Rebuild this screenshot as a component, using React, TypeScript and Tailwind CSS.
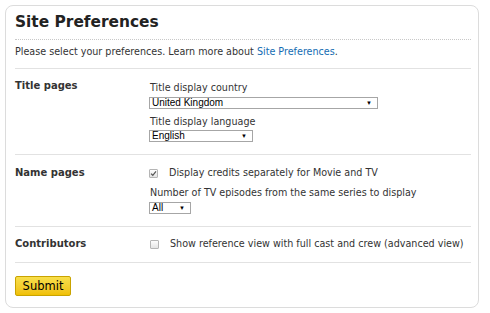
import React from "react";

const font = { fontFamily: '"DejaVu Sans", Verdana, sans-serif' };

function FakeSelect({ value, width }: { value: string; width: string }) {
  return (
    <div
      className={`flex h-[12px] items-center justify-between border border-[#a6a6a6] bg-white pl-[2px] pr-[5px] text-[10px] leading-[10px] text-black ${width}`}
      style={{ fontFamily: '"Liberation Sans", Arial, sans-serif' }}
    >
      <span>{value}</span>
      <span className="text-[6px] leading-[6px]">▼</span>
    </div>
  );
}

function Checkbox({ checked }: { checked?: boolean }) {
  return (
    <div className="flex h-[9px] w-[9px] items-center justify-center rounded-[1px] border border-[#b5b5b5] bg-gradient-to-b from-[#fdfdfd] to-[#e4e4e4]">
      {checked && (
        <svg width="7" height="7" viewBox="0 0 7 7">
          <path d="M1 3.6 L2.8 5.3 L6 1.4" fill="none" stroke="#555" strokeWidth="1.2" />
        </svg>
      )}
    </div>
  );
}

export default function App() {
  return (
    <div className="h-[313px] w-[490px] bg-white pl-[5px] pt-[5px]" style={font}>
      <div className="flex h-[303px] w-[474px] flex-col rounded-[8px] border border-[#dcdcdc] pl-[9px] pr-[7px] text-[#333]">
        <div className="border-b border-dotted border-[#c8c8c8] pb-[7px] pt-[6px]">
          <h1 className="text-[15.4px] font-bold leading-[20px] text-[#222]">Site Preferences</h1>
        </div>
        <div className="border-b border-[#e2e2e2] pb-[10px] pt-[6px] text-[9.6px] leading-[12px]">
          Please select your preferences. Learn more about{" "}
          <span className="text-[#136cb2]">Site Preferences</span>.
        </div>
        <div className="flex border-b border-[#e2e2e2] pb-[12px] pt-[11px] text-[9.6px] leading-[12px]">
          <div className="w-[134px] text-[10px] font-bold">Title pages</div>
          <div className="flex flex-col pt-[2px]">
            <div className="pl-[1px]">Title display country</div>
            <div className="mt-[3px]">
              <FakeSelect value="United Kingdom" width="w-[229px]" />
            </div>
            <div className="mt-[7px] pl-[1px]">Title display language</div>
            <div className="mt-[2px]">
              <FakeSelect value="English" width="w-[104px]" />
            </div>
          </div>
        </div>
        <div className="flex border-b border-[#e2e2e2] pb-[12px] pt-[12px] text-[9.6px] leading-[12px]">
          <div className="w-[134px] text-[10px] font-bold">Name pages</div>
          <div className="flex flex-col">
            <div className="flex items-center">
              <Checkbox checked />
              <span className="ml-[11px]">Display credits separately for Movie and TV</span>
            </div>
            <div className="mt-[8px] pl-[1px]">Number of TV episodes from the same series to display</div>
            <div className="mt-[3px]">
              <FakeSelect value="All" width="w-[42px]" />
            </div>
          </div>
        </div>
        <div className="flex border-b border-[#e2e2e2] pb-[12px] pt-[11px] text-[9.6px] leading-[12px]">
          <div className="w-[134px] text-[10px] font-bold">Contributors</div>
          <div className="flex items-center">
            <div className="pl-[1px]">
              <Checkbox />
            </div>
            <span className="ml-[11px]">Show reference view with full cast and crew (advanced view)</span>
          </div>
        </div>
        <div className="pt-[10px]">
          <button className="h-[20px] w-[56px] rounded-[2px] border border-[#c9a300] bg-gradient-to-b from-[#f8df4a] to-[#f0c000] text-[11.5px] leading-[18px] text-black">
            Submit
          </button>
        </div>
      </div>
    </div>
  );
}
